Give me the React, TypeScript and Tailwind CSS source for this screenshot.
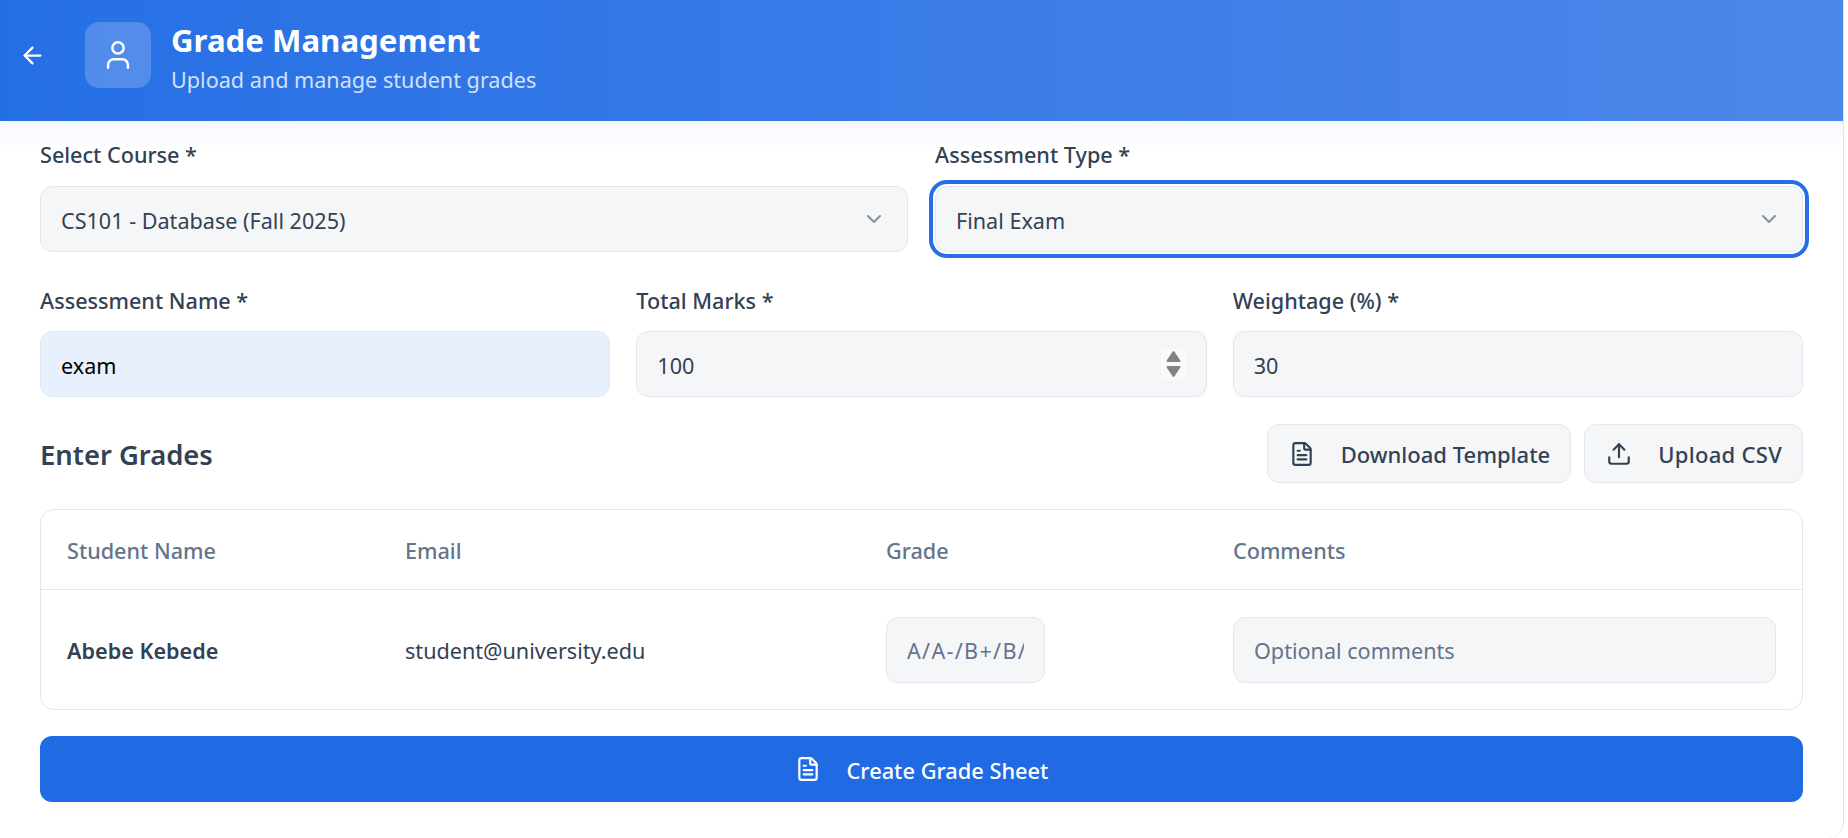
import { ArrowLeft, ChevronDown, FileText, Upload, User } from "lucide-react";

const fieldClass =
  "h-[66px] w-full rounded-[12px] border border-[#e2e6ee] bg-[#f5f6f8] pt-[2px] px-[20px] text-[21.6px] text-[#334155] outline-none placeholder:text-[#64748b]";
const labelClass = "block text-[21.6px] leading-[29px] font-medium text-[#334155]";
const actionClass =
  "flex h-[59px] items-center gap-[26px] rounded-[12px] border border-[#e2e6ee] bg-[#f5f6f8] pr-[20px] pl-[21px] text-[22px] font-medium text-[#334155]";

function SelectField({ label, value, focused }: { label: string; value: string; focused?: boolean }) {
  return (
    <div>
      <label className={`${labelClass} -mt-[1px] mb-[17px]`}>{label}</label>
      <div className="relative">
        <select
          defaultValue={value}
          className={`${fieldClass} appearance-none !pt-[4px] ${focused ? "ring-[4px] ring-[#256fe6] ring-offset-2" : ""}`}
        >
          <option>{value}</option>
        </select>
        <ChevronDown className="pointer-events-none absolute top-[21px] right-[22px] size-[24px] text-[#8b909a]" />
      </div>
    </div>
  );
}

function TextField({ label, value, autofilled, spinner }: { label: string; value: string; autofilled?: boolean; spinner?: boolean }) {
  return (
    <div>
      <label className={`${labelClass} mb-[16px]`}>{label}</label>
      <div className="relative">
        <input
          readOnly
          value={value}
          className={`${fieldClass} ${autofilled ? "!bg-[#e8f0fe] !text-black" : ""}`}
        />
        {spinner && (
          <svg className="absolute top-[18px] right-[21px] h-[30px] w-[25px]" viewBox="0 0 25 30">
            <rect width="25" height="30" fill="#fafafb" />
            <path d="M12.5 3 18.5 12H6.5Z" fill="#848484" stroke="#848484" strokeWidth="2" strokeLinejoin="round" />
            <path d="M6.5 18h12L12.5 27Z" fill="#848484" stroke="#848484" strokeWidth="2" strokeLinejoin="round" />
          </svg>
        )}
      </div>
    </div>
  );
}

export default function App() {
  return (
    <div className="h-[838px] w-[1848px] overflow-hidden bg-white font-['Noto_Sans',sans-serif]">
      <div className="h-[838px] w-[1844px] overflow-hidden rounded-b-[16px] border-r border-[#e2e4ea] bg-white">
        {/* Header */}
        <header className="flex h-[121px] w-[1848px] items-center bg-gradient-to-r from-[#256fe5] to-[#4c87e9] pb-[11px] pl-[19px] text-white">
          <ArrowLeft className="mr-[39px] size-[27px]" />
          <div className="mr-[20px] flex size-[66px] items-center justify-center rounded-[14px] bg-white/20">
            <User className="size-[34px]" strokeWidth={1.75} />
          </div>
          <div className="mt-[4px]">
            <h1 className="text-[31.2px] leading-[44px] font-bold">Grade Management</h1>
            <p className="mt-[2px] text-[21.6px] leading-[32px] text-[#d2e1fb]">Upload and manage student grades</p>
          </div>
        </header>

        {/* Form */}
        <main className="bg-[linear-gradient(#f5f8fe,#ffffff_30px)] px-[40px] pt-[20px]">
          <div className="grid grid-cols-2 gap-[27px]">
            <SelectField label="Select Course *" value="CS101 - Database (Fall 2025)" />
            <SelectField label="Assessment Type *" value="Final Exam" focused />
          </div>

          <div className="mt-[34px] grid grid-cols-3 gap-[26px]">
            <TextField label="Assessment Name *" value="exam" autofilled />
            <TextField label="Total Marks *" value="100" spinner />
            <TextField label="Weightage (%) *" value="30" />
          </div>

          <div className="mt-[27px] flex h-[59px] items-center justify-between">
            <h2 className="pt-[2px] text-[27.4px] font-semibold text-[#334155]">Enter Grades</h2>
            <div className="flex gap-[13px]">
              <button className={actionClass}>
                <FileText className="size-[26px]" />
                <span className="pt-[2px]">Download Template</span>
              </button>
              <button className={actionClass}>
                <Upload className="size-[26px]" />
                <span className="pt-[2px] tracking-[0.3px]">Upload CSV</span>
              </button>
            </div>
          </div>

          {/* Grades table */}
          <div className="mt-[26px] rounded-[14px] border border-[#e2e6ee] bg-white">
            <div className="grid h-[80px] grid-cols-[338px_481px_347px_1fr] items-center border-b border-[#e2e6ee] pt-[4px] pl-[26px] text-[21.6px] font-medium text-[#64748b]">
              <span>Student Name</span>
              <span>Email</span>
              <span>Grade</span>
              <span>Comments</span>
            </div>
            <div className="grid h-[119px] grid-cols-[338px_481px_347px_1fr] items-center pr-[26px] pl-[26px] text-[21.6px] text-[#334155]">
              <span className="pt-[4px] font-semibold">Abebe Kebede</span>
              <span className="pt-[4px]">student@university.edu</span>
              <input placeholder="A/A-/B+/B/" className={`${fieldClass} !w-[159px] tracking-[1.3px]`} />
              <input placeholder="Optional comments" className={fieldClass} />
            </div>
          </div>

          <button className="mt-[26px] flex h-[66px] w-full items-center justify-center gap-[26px] rounded-[12px] bg-[#206be3] text-[21.8px] font-medium text-white">
            <FileText className="size-[26px]" />
            <span className="pt-[4px]">Create Grade Sheet</span>
          </button>
        </main>
      </div>
    </div>
  );
}
